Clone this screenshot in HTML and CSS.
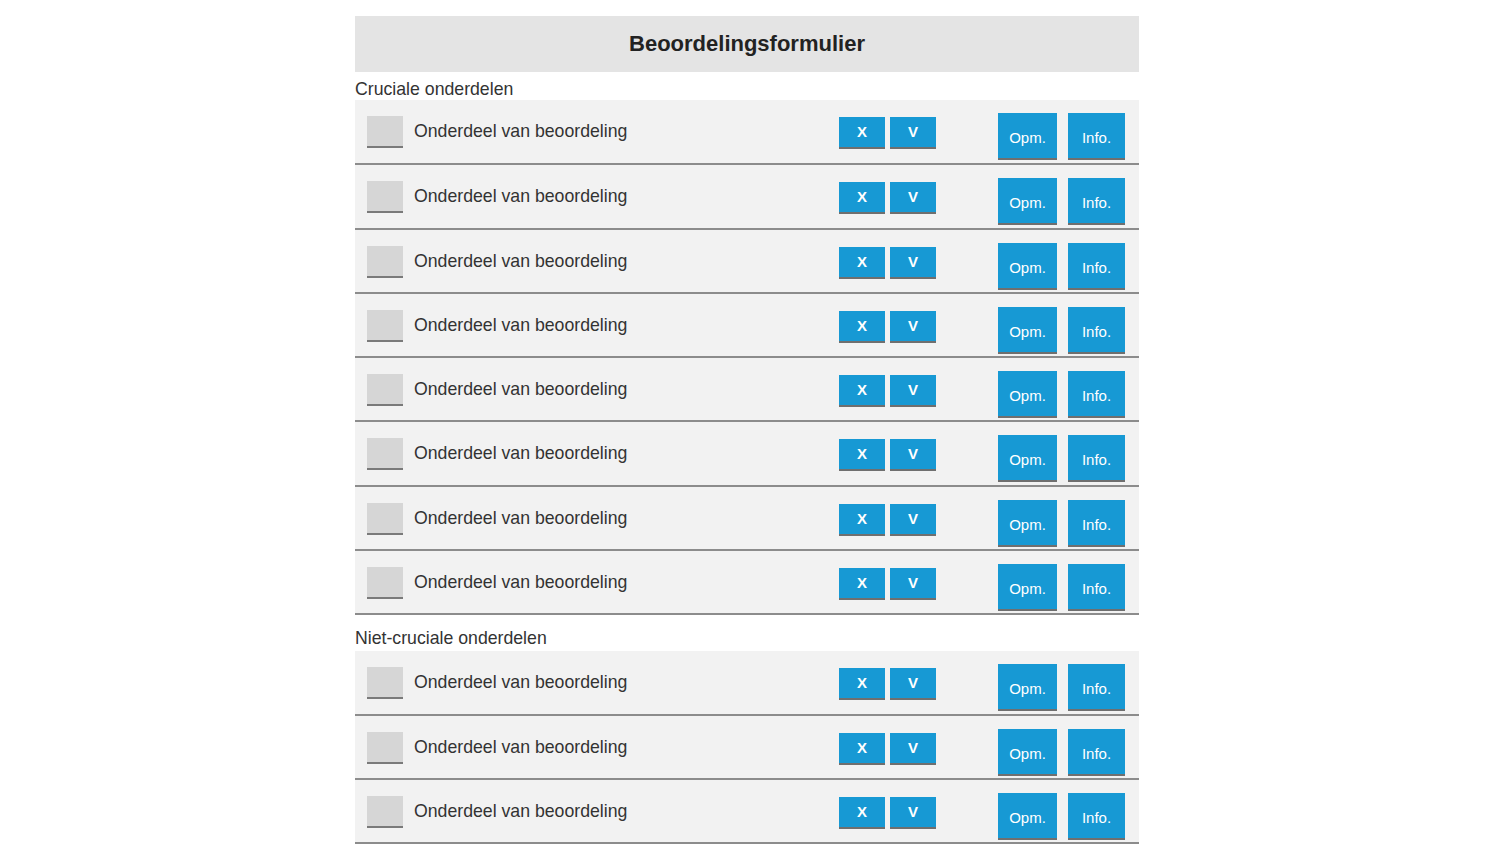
FILE: index.html
```html
<!DOCTYPE html>
<html lang="nl">
<head>
<meta charset="utf-8">
<title>Beoordelingsformulier</title>
<link rel="stylesheet" href="styles.css">
</head>
<body>
<div class="form">
  <div class="header">Beoordelingsformulier</div>

  <div class="section-label first">Cruciale onderdelen</div>
  <div class="row"><span class="check"></span><span class="label">Onderdeel van beoordeling</span><div class="xv"><button class="btn small">X</button><button class="btn small">V</button></div><div class="actions"><button class="btn big opm">Opm.</button><button class="btn big info">Info.</button></div></div>
  <div class="row"><span class="check"></span><span class="label">Onderdeel van beoordeling</span><div class="xv"><button class="btn small">X</button><button class="btn small">V</button></div><div class="actions"><button class="btn big opm">Opm.</button><button class="btn big info">Info.</button></div></div>
  <div class="row"><span class="check"></span><span class="label">Onderdeel van beoordeling</span><div class="xv"><button class="btn small">X</button><button class="btn small">V</button></div><div class="actions"><button class="btn big opm">Opm.</button><button class="btn big info">Info.</button></div></div>
  <div class="row"><span class="check"></span><span class="label">Onderdeel van beoordeling</span><div class="xv"><button class="btn small">X</button><button class="btn small">V</button></div><div class="actions"><button class="btn big opm">Opm.</button><button class="btn big info">Info.</button></div></div>
  <div class="row"><span class="check"></span><span class="label">Onderdeel van beoordeling</span><div class="xv"><button class="btn small">X</button><button class="btn small">V</button></div><div class="actions"><button class="btn big opm">Opm.</button><button class="btn big info">Info.</button></div></div>
  <div class="row"><span class="check"></span><span class="label">Onderdeel van beoordeling</span><div class="xv"><button class="btn small">X</button><button class="btn small">V</button></div><div class="actions"><button class="btn big opm">Opm.</button><button class="btn big info">Info.</button></div></div>
  <div class="row"><span class="check"></span><span class="label">Onderdeel van beoordeling</span><div class="xv"><button class="btn small">X</button><button class="btn small">V</button></div><div class="actions"><button class="btn big opm">Opm.</button><button class="btn big info">Info.</button></div></div>
  <div class="row"><span class="check"></span><span class="label">Onderdeel van beoordeling</span><div class="xv"><button class="btn small">X</button><button class="btn small">V</button></div><div class="actions"><button class="btn big opm">Opm.</button><button class="btn big info">Info.</button></div></div>

  <div class="section-label second">Niet-cruciale onderdelen</div>
  <div class="row"><span class="check"></span><span class="label">Onderdeel van beoordeling</span><div class="xv"><button class="btn small">X</button><button class="btn small">V</button></div><div class="actions"><button class="btn big opm">Opm.</button><button class="btn big info">Info.</button></div></div>
  <div class="row"><span class="check"></span><span class="label">Onderdeel van beoordeling</span><div class="xv"><button class="btn small">X</button><button class="btn small">V</button></div><div class="actions"><button class="btn big opm">Opm.</button><button class="btn big info">Info.</button></div></div>
  <div class="row"><span class="check"></span><span class="label">Onderdeel van beoordeling</span><div class="xv"><button class="btn small">X</button><button class="btn small">V</button></div><div class="actions"><button class="btn big opm">Opm.</button><button class="btn big info">Info.</button></div></div>
</div>
</body>
</html>
```

FILE: styles.css
```css
html, body {
  margin: 0;
  padding: 0;
  background: #ffffff;
}
body {
  font-family: "Liberation Sans", Arial, sans-serif;
  color: #333333;
}
.form {
  width: 784px;
  margin: 16px 0 0 355px;
}
.header {
  height: 56px;
  background: #e4e4e4;
  display: flex;
  align-items: center;
  justify-content: center;
  font-size: 22px;
  font-weight: bold;
  color: #222222;
}
.section-label {
  font-size: 17.7px;
  line-height: 20px;
  color: #333333;
}
.section-label.first {
  padding: 7px 0 1px;
}
.section-label.second {
  padding: 13px 0 3px;
}
.row {
  height: 62.3px;
  background: #f2f2f2;
  border-bottom: 2px solid #8c8c8c;
  display: flex;
  align-items: flex-start;
  box-sizing: content-box;
}
.section-label.first + .row {
  height: 63.3px;
}
.check {
  width: 36px;
  height: 30px;
  background: #d6d6d6;
  border-bottom: 2px solid #7a7a7a;
  margin: 16px 0 0 12px;
  flex: none;
}
.label {
  font-size: 17.7px;
  line-height: 22px;
  margin: 20px 0 0 11px;
  color: #333333;
  flex: 1;
}
.xv {
  display: flex;
  gap: 5px;
  margin-top: 17px;
}
.actions {
  display: flex;
  gap: 11px;
  margin: 13px 14px 0 62px;
}
.btn {
  font-family: "Liberation Sans", Arial, sans-serif;
  background: #1799d4;
  color: #ffffff;
  border: none;
  border-bottom: 2px solid #6f6f6f;
  padding: 0;
  margin: 0;
  box-sizing: border-box;
  display: flex;
  align-items: center;
  justify-content: center;
}
.btn.small {
  width: 46px;
  height: 32px;
  font-size: 15px;
  font-weight: bold;
  padding-bottom: 1px;
}
.btn.big {
  height: 47px;
  font-size: 15px;
  padding-top: 4px;
}
.btn.opm {
  width: 59px;
}
.btn.info {
  width: 57px;
}
```
